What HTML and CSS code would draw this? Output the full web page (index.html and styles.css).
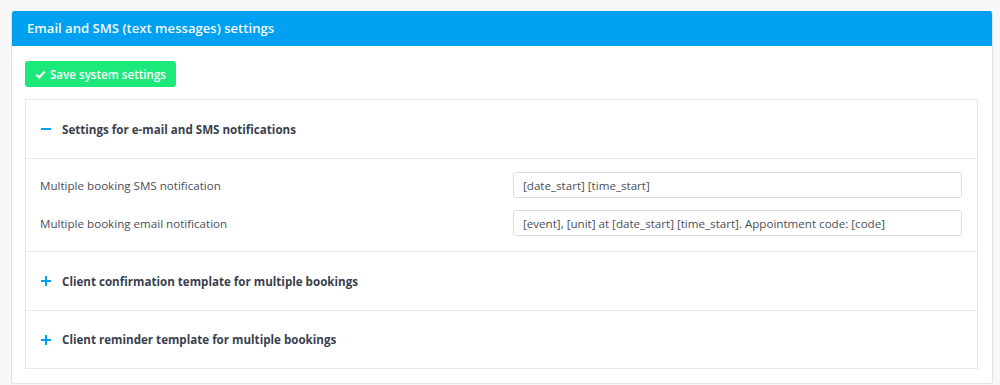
FILE: index.html
```html
<!DOCTYPE html>
<html lang="en">
<head>
    <meta charset="UTF-8">
    <title>Email and SMS settings</title>
    <link rel="stylesheet" href="styles.css">
</head>
<body>
    <div class="panel">
        <div class="panel-heading">Email and SMS (text messages) settings</div>

        <div class="panel-body">
            <button type="button" class="save-btn">
                <svg class="check" viewBox="0 0 12 12" width="11" height="11">
                    <path d="M1.5 6.2 L4.6 9.2 L10.6 2.8" fill="none" stroke="#fff" stroke-width="2.4"/>
                </svg>
                Save system settings
            </button>

            <div class="accordion">
                <div class="acc-item open">
                    <div class="acc-title">
                        <span class="acc-icon minus"></span>
                        Settings for e-mail and SMS notifications
                    </div>
                    <div class="acc-content">
                        <div class="form-row">
                            <label for="smsNotify">Multiple booking SMS notification</label>
                            <input type="text" id="smsNotify" value="[date_start] [time_start]">
                        </div>
                        <div class="form-row">
                            <label for="emailNotify">Multiple booking email notification</label>
                            <input type="text" id="emailNotify" value="[event], [unit] at [date_start] [time_start]. Appointment code: [code]">
                        </div>
                    </div>
                </div>

                <div class="acc-item">
                    <div class="acc-title">
                        <span class="acc-icon plus"></span>
                        Client confirmation template for multiple bookings
                    </div>
                </div>

                <div class="acc-item">
                    <div class="acc-title">
                        <span class="acc-icon plus"></span>
                        Client reminder template for multiple bookings
                    </div>
                </div>
            </div>
        </div>
    </div>
</body>
</html>
```

FILE: styles.css
```css
:root {
    --primary-color: #00a0f0;
    --success-color: #1de97a;
    --text-color: #3a3f4d;
    --label-color: #4a4f5a;
    --border-color: #e8e8e8;
    --bg-color: #ffffff;
    --light-bg: #f8f8f8;
}

body {
    margin: 0;
    padding: 11px 7px 0 11px;
    font-family: 'Open Sans', 'Liberation Sans', sans-serif;
    background-color: var(--light-bg);
    color: var(--text-color);
}

.panel {
    background: var(--bg-color);
    border: 1px solid #e2e2e2;
    border-top: none;
    border-radius: 3px;
    overflow: hidden;
}

.panel-heading {
    background: var(--primary-color);
    color: #f4faff;
    font-size: 13.1px;
    font-weight: 600;
    height: 35px;
    line-height: 35px;
    padding: 0 15px;
}

.panel-body {
    padding: 15px 14px 14px 13px;
}

.save-btn {
    display: flex;
    align-items: center;
    gap: 4px;
    height: 26px;
    padding: 0 10px 0 10px;
    background: var(--success-color);
    color: #fff;
    border: none;
    border-radius: 3px;
    font-family: inherit;
    font-size: 11.6px;
    font-weight: 600;
    cursor: pointer;
}

.accordion {
    margin-top: 12px;
    border: 1px solid var(--border-color);
}

.acc-item + .acc-item {
    border-top: 1px solid var(--border-color);
}

.acc-title {
    display: flex;
    align-items: center;
    height: 58px;
    padding: 0 15px;
    font-size: 11.6px;
    font-weight: 700;
    color: var(--text-color);
}

.acc-item:last-child .acc-title {
    height: 57px;
}

.acc-icon {
    position: relative;
    width: 10px;
    height: 10px;
    margin-right: 11px;
}

.acc-icon::before,
.acc-icon::after {
    content: "";
    position: absolute;
    background: var(--primary-color);
}

.acc-icon::before {
    left: 0;
    top: 4px;
    width: 10px;
    height: 2px;
}

.acc-icon.plus::after {
    left: 4px;
    top: 0;
    width: 2px;
    height: 10px;
}

.acc-content {
    border-top: 1px solid var(--border-color);
    padding: 13px 15px 15px 14px;
}

.form-row {
    display: flex;
    align-items: center;
}

.form-row + .form-row {
    margin-top: 12px;
}

.form-row label {
    flex: 1;
    font-size: 11.6px;
    color: var(--label-color);
}

.form-row input {
    width: 449px;
    height: 26px;
    box-sizing: border-box;
    padding: 0 9px;
    border: 1px solid #dcdcdc;
    border-radius: 3px;
    font-family: inherit;
    font-size: 11.6px;
    color: var(--label-color);
}
```
